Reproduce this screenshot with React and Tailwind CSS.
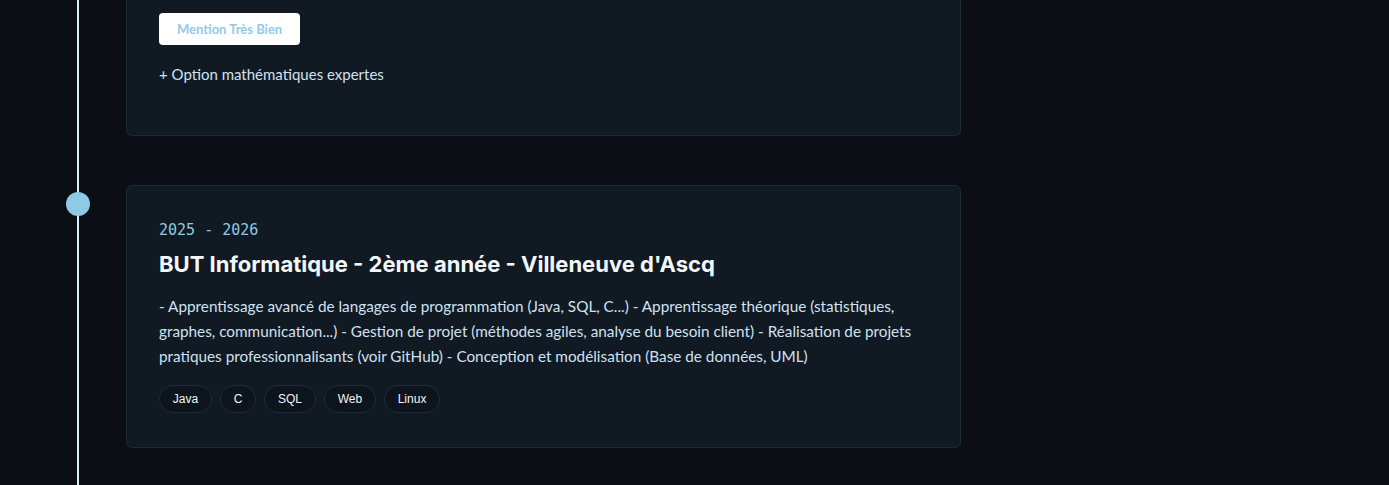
export default function App() {
  const tags = ['Java', 'C', 'SQL', 'Web', 'Linux'];

  return (
    <div className="relative min-h-screen h-[485px] overflow-hidden bg-[#0b0f15]">
      {/* timeline line */}
      <div className="absolute left-[77px] top-0 bottom-0 w-[2px] bg-[#dbeefa]" />

      <div className="pl-[126px] w-[961px] flex flex-col gap-[49px]">
        {/* previous item, cut off at the top */}
        <div className="rounded-b-md border border-t-0 border-[#1c2a38] bg-[#111923] px-8 pt-[13px] pb-[48px]">
          <span
            className="inline-block rounded bg-white px-[18px] h-8 leading-8 text-[13px] font-bold text-[#93c9e6]"
            style={{ fontFamily: 'Lato, "Noto Sans", sans-serif' }}
          >
            Mention Très Bien
          </span>
          <p
            className="mt-4 text-[15px] leading-[26px] text-[#cfe1f1]"
            style={{ fontFamily: 'Lato, "Noto Sans", sans-serif' }}
          >
            + Option mathématiques expertes
          </p>
        </div>

        {/* current item */}
        <div className="relative rounded-md border border-[#1c2a38] bg-[#111923] px-8 pt-[34px] pb-[34px]">
          <div className="absolute left-[-61px] top-[6px] w-6 h-6 rounded-full bg-[#8ecae6]" />
          <p
            className="text-[15px] leading-5 text-[#8ecae6]"
            style={{ fontFamily: '"DejaVu Sans Mono", monospace' }}
          >
            2025 - 2026
          </p>
          <h3
            className="mt-2 text-[22px] leading-8 font-bold text-[#f3f7fb]"
            style={{ fontFamily: 'Inter, sans-serif' }}
          >
            BUT Informatique - 2ème année - Villeneuve d'Ascq
          </h3>
          <p
            className="mt-[14px] text-[15.3px] leading-[25px] text-[#cfe1f1]"
            style={{ fontFamily: 'Lato, "Noto Sans", sans-serif' }}
          >
            - Apprentissage avancé de langages de programmation (Java, SQL, C...) - Apprentissage théorique (statistiques, graphes, communication...) - Gestion de projet (méthodes agiles, analyse du besoin client) - Réalisation de projets pratiques professionnalisants (voir GitHub) - Conception et modélisation (Base de données, UML)
          </p>
          <div className="mt-4 flex flex-wrap gap-2">
            {tags.map((t) => (
              <span
                key={t}
                className="h-7 leading-[26px] px-[12.8px] rounded-full border border-[#1c2a38] bg-[#0d141c] text-[12px] text-[#f1f5f9]"
                style={{ fontFamily: '"Liberation Sans", Arial, sans-serif' }}
              >
                {t}
              </span>
            ))}
          </div>
        </div>
      </div>
    </div>
  );
}
